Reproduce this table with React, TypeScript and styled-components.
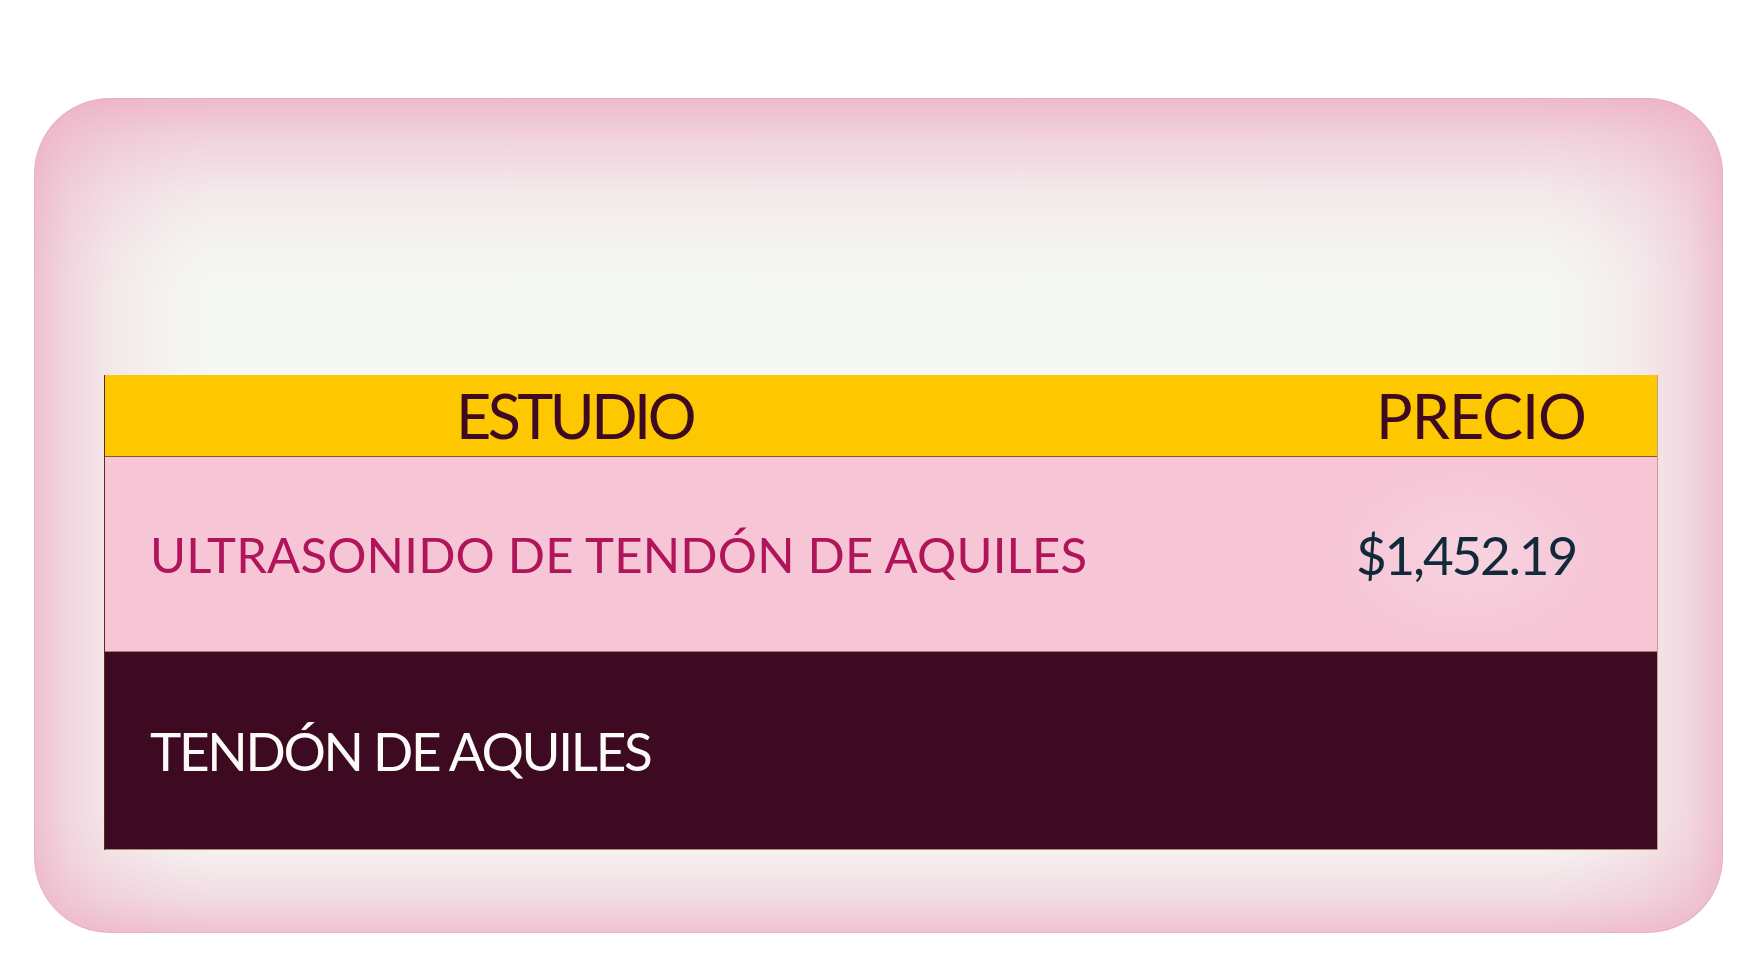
import React from "react";
import styled, { createGlobalStyle } from "styled-components";

const Global = createGlobalStyle`
  html, body { margin: 0; padding: 0; background: #ffffff; }
  body { font-family: "Lato", "DejaVu Sans", sans-serif; }
  * { box-sizing: border-box; }
`;

const Page = styled.div`
  width: 1752px;
  height: 968px;
  padding: 98px 29px 35px 34px;
`;

const PINK = "236, 170, 195";

const Card = styled.section`
  width: 1689px;
  height: 835px;
  border-radius: 76px;
  background:
    linear-gradient(to bottom, rgba(${PINK}, 0.8) 0px, rgba(${PINK}, 0.48) 40px, rgba(${PINK}, 0.2) 95px, rgba(${PINK}, 0.05) 150px, rgba(${PINK}, 0) 190px),
    linear-gradient(to top, rgba(${PINK}, 0.7) 0px, rgba(${PINK}, 0.36) 35px, rgba(${PINK}, 0.1) 80px, rgba(${PINK}, 0) 120px),
    linear-gradient(to right, rgba(${PINK}, 0.72) 0px, rgba(${PINK}, 0.42) 35px, rgba(${PINK}, 0.2) 80px, rgba(${PINK}, 0.05) 140px, rgba(${PINK}, 0) 180px),
    linear-gradient(to left, rgba(${PINK}, 0.72) 0px, rgba(${PINK}, 0.42) 35px, rgba(${PINK}, 0.2) 80px, rgba(${PINK}, 0.05) 140px, rgba(${PINK}, 0) 180px),
    #f5f8f4;
  box-shadow: inset 0 0 0 1px rgba(225, 165, 185, 0.5);
  padding: 277px 65px 83px 70px;
  display: flex;
  flex-direction: column;
`;

const Table = styled.div`
  display: grid;
  grid-template-columns: 1200px 1fr;
  grid-template-rows: 82px 195px 198px;
  border-right: 1px solid #c4a08e;
  border-left: 1px solid #5a2a1c;
`;

const HeadCell = styled.div<{ $align: "start" | "center" }>`
  background: #fec800;
  color: #3d0a22;
  font-size: 61px;
  line-height: 1;
  display: flex;
  align-items: center;
  justify-content: ${(p) => (p.$align === "center" ? "center" : "flex-start")};
  padding-left: ${(p) => (p.$align === "center" ? "0" : "351px")};
  letter-spacing: ${(p) => (p.$align === "center" ? "-1px" : "-3.5px")};
  border-bottom: 1px solid #8a5a1e;
`;

const PinkCell = styled.div<{ $price?: boolean }>`
  background: ${(p) =>
    p.$price
      ? "radial-gradient(ellipse 130px 90px at 46% 50%, #f8d3df 0%, #f6c6d6 100%)"
      : "#f6c6d6"};
  color: ${(p) => (p.$price ? "#102a3c" : "#b0145a")};
  font-size: ${(p) => (p.$price ? "53px" : "49px")};
  letter-spacing: ${(p) => (p.$price ? "-2.2px" : "0.2px")};
  line-height: 1;
  display: flex;
  align-items: center;
  justify-content: ${(p) => (p.$price ? "center" : "flex-start")};
  padding-left: ${(p) => (p.$price ? "0" : "45px")};
  padding-right: ${(p) => (p.$price ? "30px" : "0")};
  border-bottom: 1px solid #a87a80;
`;

const DarkRow = styled.div`
  grid-column: 1 / span 2;
  background: #3d0a22;
  color: #fdfbf7;
  font-size: 53px;
  letter-spacing: -2.3px;
  line-height: 1;
  display: flex;
  align-items: center;
  padding-left: 45px;
  border-bottom: 1px solid #b08870;
`;

export default function App() {
  return (
    <>
      <Global />
      <Page>
        <Card>
          <Table>
            <HeadCell $align="start">ESTUDIO</HeadCell>
            <HeadCell $align="center">PRECIO</HeadCell>
            <PinkCell>ULTRASONIDO DE TENDÓN DE AQUILES</PinkCell>
            <PinkCell $price>$1,452.19</PinkCell>
            <DarkRow>TENDÓN DE AQUILES</DarkRow>
          </Table>
        </Card>
      </Page>
    </>
  );
}
